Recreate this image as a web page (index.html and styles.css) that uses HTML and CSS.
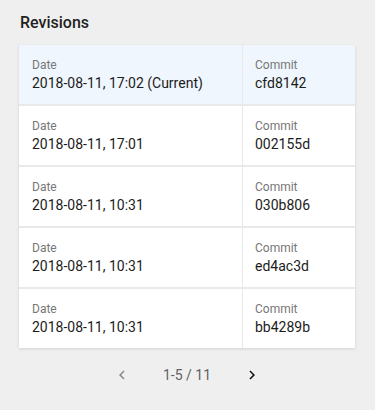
FILE: index.html
```html
<!DOCTYPE html>
<html lang="en">
<head>
  <meta charset="UTF-8" />
  <meta name="viewport" content="width=device-width, initial-scale=1" />
  <title>Revisions</title>
  <link rel="stylesheet" href="styles.css">
</head>
<body>

  <div class="revisions">
    <h2 class="title">Revisions</h2>

    <div class="card">
      <div class="row current">
        <div class="cell date">
          <div class="label">Date</div>
          <div class="value">2018-08-11, 17:02 (Current)</div>
        </div>
        <div class="cell commit">
          <div class="label">Commit</div>
          <div class="value">cfd8142</div>
        </div>
      </div>
      <div class="row">
        <div class="cell date">
          <div class="label">Date</div>
          <div class="value">2018-08-11, 17:01</div>
        </div>
        <div class="cell commit">
          <div class="label">Commit</div>
          <div class="value">002155d</div>
        </div>
      </div>
      <div class="row">
        <div class="cell date">
          <div class="label">Date</div>
          <div class="value">2018-08-11, 10:31</div>
        </div>
        <div class="cell commit">
          <div class="label">Commit</div>
          <div class="value">030b806</div>
        </div>
      </div>
      <div class="row">
        <div class="cell date">
          <div class="label">Date</div>
          <div class="value">2018-08-11, 10:31</div>
        </div>
        <div class="cell commit">
          <div class="label">Commit</div>
          <div class="value">ed4ac3d</div>
        </div>
      </div>
      <div class="row">
        <div class="cell date">
          <div class="label">Date</div>
          <div class="value">2018-08-11, 10:31</div>
        </div>
        <div class="cell commit">
          <div class="label">Commit</div>
          <div class="value">bb4289b</div>
        </div>
      </div>
    </div>

    <div class="pager">
      <button class="page-btn disabled" aria-label="Previous page">
        <svg viewBox="0 0 24 24" width="18" height="18"><path d="M15.41 7.41L14 6l-6 6 6 6 1.41-1.41L10.83 12z"/></svg>
      </button>
      <span class="page-info">1-5 / 11</span>
      <button class="page-btn" aria-label="Next page">
        <svg viewBox="0 0 24 24" width="18" height="18"><path d="M8.59 16.59L10 18l6-6-6-6-1.41 1.41L13.17 12z"/></svg>
      </button>
    </div>
  </div>

</body>
</html>
```

FILE: styles.css
```css
body {
  font-family: Roboto, 'Noto Sans', sans-serif;
  background: #efefef;
  margin: 0;
  padding: 0;
  color: #212121;
}

.revisions {
  padding: 11px 20px 0 19px;
}

.title {
  margin: 0 0 10px 1px;
  font-size: 16px;
  line-height: 24px;
  font-weight: 500;
  color: #1f1f1f;
}

.card {
  background: white;
  box-shadow: 0 1px 3px rgba(0,0,0,0.12);
}

.row {
  display: flex;
  border-bottom: 2px solid #e9e9e9;
}

.row:last-child {
  border-bottom: none;
}

.row.current {
  background: #eff6fd;
}

.cell {
  padding: 12px 13px 11px;
}

.cell.date {
  width: 224px;
  box-sizing: border-box;
  border-right: 1px solid #e9e9e9;
}

.cell.commit {
  flex: 1;
  padding-left: 12px;
}

.label {
  font-size: 12px;
  line-height: 16px;
  color: #777;
}

.value {
  font-size: 14px;
  line-height: 20px;
  color: #1c1c1c;
}

.pager {
  display: flex;
  justify-content: center;
  align-items: center;
  gap: 17px;
  margin-top: 7px;
}

.page-btn {
  width: 48px;
  height: 40px;
  display: flex;
  align-items: center;
  justify-content: center;
  border: none;
  background: none;
  padding: 0;
  cursor: pointer;
  fill: #111;
}

.page-btn.disabled {
  fill: #8a8a8a;
  cursor: default;
}

.page-info {
  font-size: 14px;
  color: #616161;
}
```
